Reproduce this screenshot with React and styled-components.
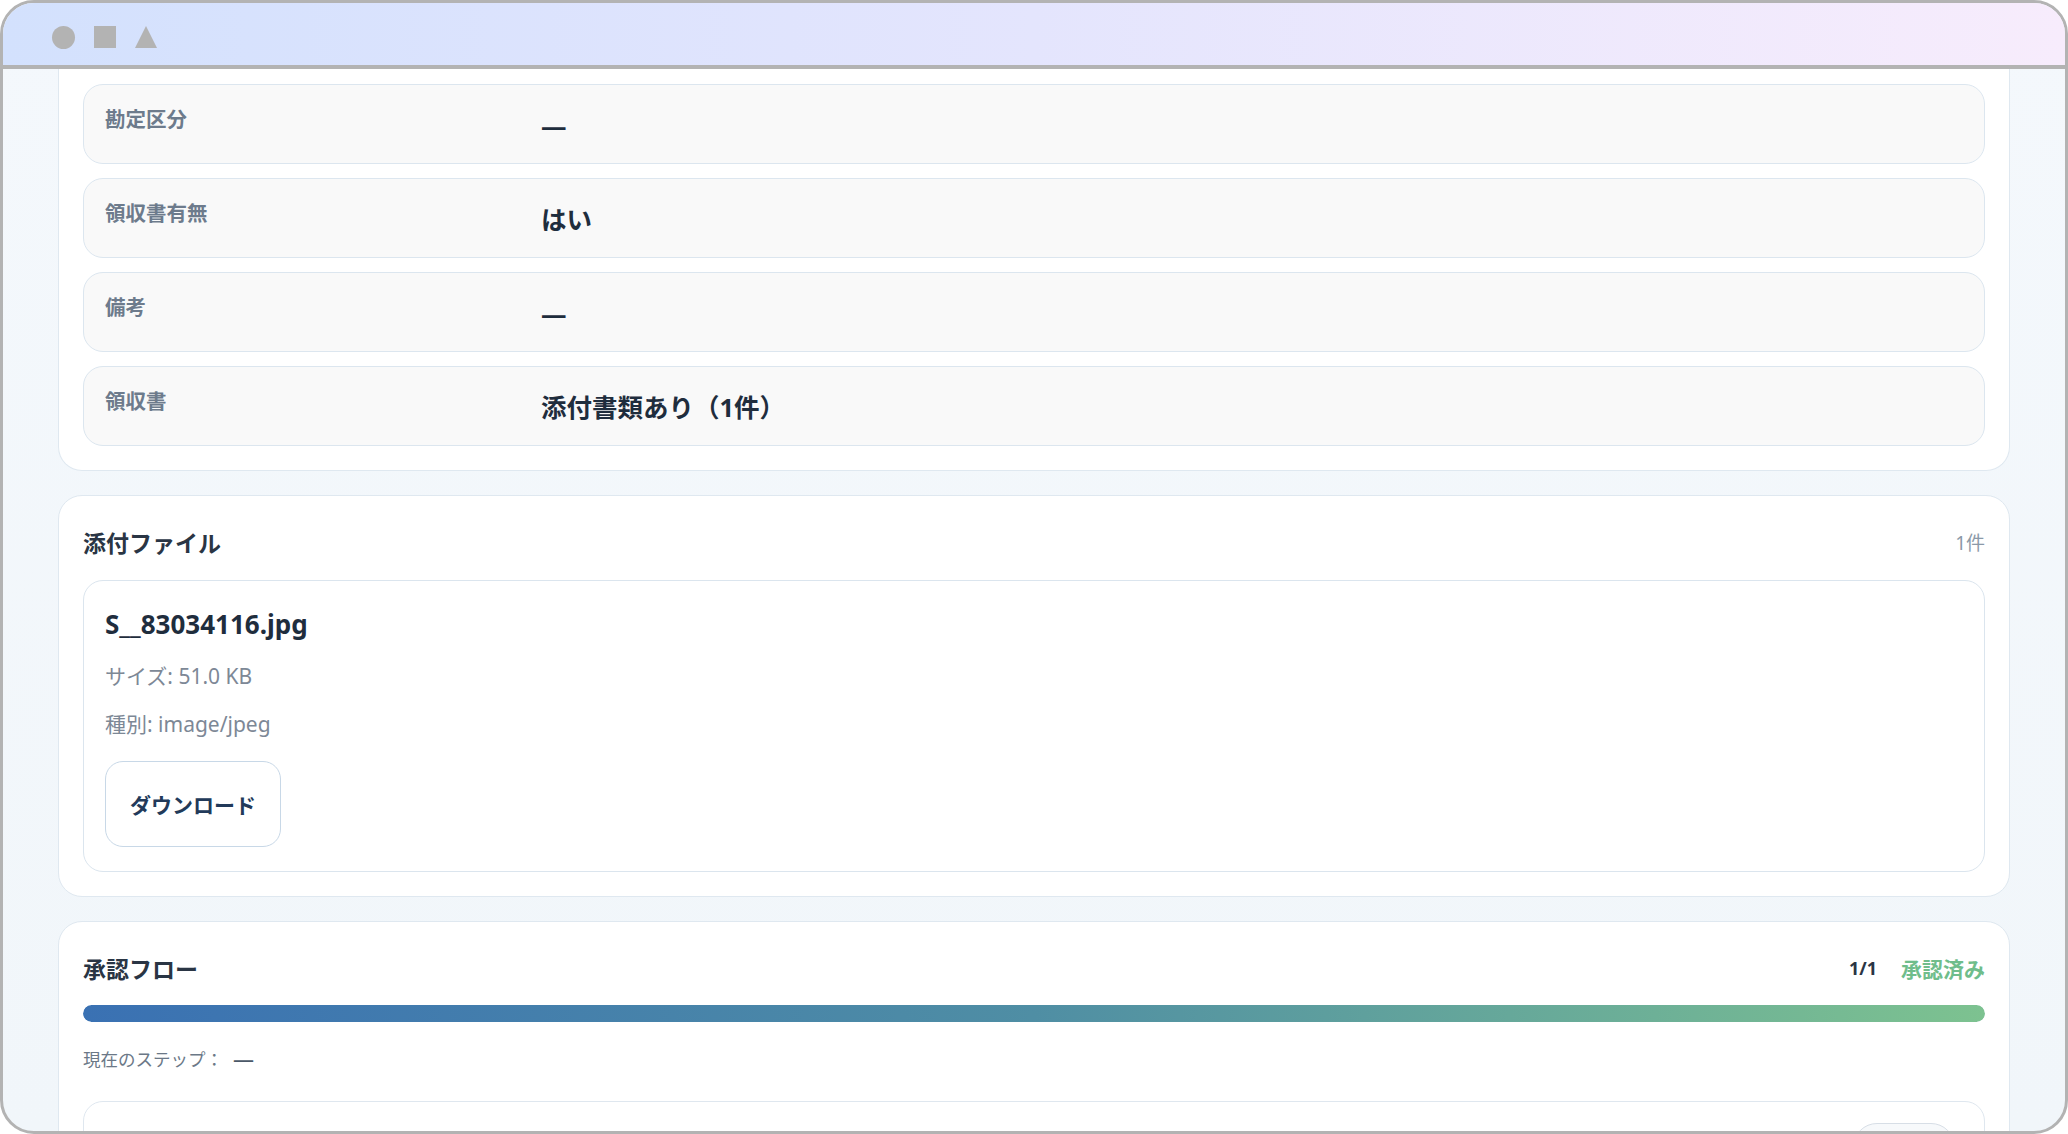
import React from "react";
import styled, { createGlobalStyle } from "styled-components";

const GlobalStyle = createGlobalStyle`
  html, body {
    margin: 0;
    padding: 0;
    background: #ffffff;
  }
  body {
    font-family: "Noto Sans", "Noto Sans CJK JP", sans-serif;
  }
  * {
    box-sizing: border-box;
  }
`;

const Window = styled.div`
  width: 2068px;
  height: 1134px;
  border: 3px solid #b3b3b3;
  border-radius: 34px;
  overflow: hidden;
  display: flex;
  flex-direction: column;
  background: linear-gradient(180deg, #f4f8fc 0%, #f1f6fa 100%);
`;

const TitleBar = styled.div`
  flex: none;
  height: 66px;
  padding: 6px 0 0 49px;
  border-bottom: 4px solid #b3b3b3;
  background: linear-gradient(90deg, #d3e1fd 0%, #e4e5fd 50%, #f7ecfc 100%);
  display: flex;
  align-items: center;
  gap: 19px;
`;

const Dot = styled.span`
  width: 23px;
  height: 23px;
  border-radius: 50%;
  background: #b3b3b3;
`;

const Square = styled.span`
  width: 22px;
  height: 22px;
  background: #b3b3b3;
`;

const Content = styled.div`
  flex: 1;
  overflow: hidden;
  padding: 0 55px;
  display: flex;
  flex-direction: column;
  gap: 24px;
`;

const Card = styled.section`
  flex: none;
  background: #ffffff;
  border: 1px solid #dfe8f0;
  border-radius: 24px;
  padding: 24px;
  ${p =>
    p.$clipped &&
    `
    border-top: none;
    border-top-left-radius: 0;
    border-top-right-radius: 0;
    padding-top: 15px;
  `}
`;

const FieldList = styled.div`
  display: flex;
  flex-direction: column;
  gap: 14px;
`;

const FieldRow = styled.div`
  height: 80px;
  padding: 20px 21px 0;
  border: 1px solid #dce6ef;
  border-radius: 20px;
  background: #f9f9f9;
  display: grid;
  grid-template-columns: 436px 1fr;
  align-items: start;
`;

const FieldLabel = styled.div`
  font-size: 20.5px;
  font-weight: 600;
  line-height: 28px;
  color: #6d7b8c;
`;

const FieldValue = styled.div`
  font-size: 25.5px;
  font-weight: 700;
  line-height: 36px;
  margin-top: 2px;
  color: #1f2d3d;
`;

const CardHeader = styled.div`
  height: 44px;
  display: flex;
  align-items: center;
  justify-content: space-between;
`;

const CardTitle = styled.h2`
  margin: 0;
  font-size: 23px;
  font-weight: 700;
  color: #2a3544;
`;

const Count = styled.span`
  font-size: 19px;
  color: #8b99a8;
`;

const FileBox = styled.div`
  margin-top: 16px;
  padding: 24px 21px;
  border: 1px solid #dbe5ee;
  border-radius: 20px;
  display: flex;
  flex-direction: column;
  align-items: flex-start;
`;

const FileName = styled.div`
  font-size: 26px;
  font-weight: 700;
  line-height: 38px;
  color: #1f2d3d;
`;

const FileMeta = styled.div`
  margin-top: 18px;
  font-size: 21px;
  line-height: 30px;
  color: #7d8896;
`;

const OutlineButton = styled.button`
  margin-top: 22px;
  width: 176px;
  height: 86px;
  border: 1px solid #c8d8e7;
  border-radius: 18px;
  background: #ffffff;
  font-family: inherit;
  font-size: 21px;
  font-weight: 700;
  color: #223a5a;
`;

const HeaderSide = styled.div`
  display: flex;
  align-items: center;
  gap: 24px;
`;

const StepCount = styled.span`
  font-size: 18px;
  font-weight: 700;
  color: #2a3544;
`;

const StatusText = styled.span`
  font-size: 21px;
  font-weight: 600;
  color: #6fbd8b;
`;

const ProgressTrack = styled.div`
  margin-top: 15px;
  height: 17px;
  border-radius: 9px;
  background: #e6edf3;
  overflow: hidden;
`;

const ProgressFill = styled.div`
  height: 100%;
  border-radius: 9px;
  background: linear-gradient(90deg, #3a71b3 0%, #4f8ea4 50%, #7dc290 100%);
`;

const StepNote = styled.div`
  margin-top: 22px;
  font-size: 17.5px;
  line-height: 30px;
  color: #6b7887;
  display: flex;
  gap: 10px;
`;

const StepValue = styled.span`
  font-size: 21px;
  color: #4b5868;
`;

const StepBox = styled.div`
  margin-top: 27px;
  height: 90px;
  padding: 21px 29px 0 24px;
  border: 1px solid #dfe7ef;
  border-radius: 20px;
  display: flex;
  align-items: flex-start;
  justify-content: flex-end;
`;

const Pill = styled.span`
  width: 102px;
  height: 48px;
  border: 1px solid #d7dee6;
  border-radius: 24px;
  background: #f7f9fb;
`;

const fields = [
  { label: "勘定区分", value: "—" },
  { label: "領収書有無", value: "はい" },
  { label: "備考", value: "—" },
  { label: "領収書", value: "添付書類あり（1件）" },
];

const progress = 1;

export default function App() {
  return (
    <>
      <GlobalStyle />
      <Window>
        <TitleBar>
          <Dot />
          <Square />
          <svg width="22" height="22" viewBox="0 0 22 22">
            <polygon points="11,0 22,22 0,22" fill="#b3b3b3" />
          </svg>
        </TitleBar>
        <Content>
          <Card $clipped>
            <FieldList>
              {fields.map(f => (
                <FieldRow key={f.label}>
                  <FieldLabel>{f.label}</FieldLabel>
                  <FieldValue>{f.value}</FieldValue>
                </FieldRow>
              ))}
            </FieldList>
          </Card>

          <Card>
            <CardHeader>
              <CardTitle>添付ファイル</CardTitle>
              <Count>1件</Count>
            </CardHeader>
            <FileBox>
              <FileName>S__83034116.jpg</FileName>
              <FileMeta>サイズ: 51.0 KB</FileMeta>
              <FileMeta>種別: image/jpeg</FileMeta>
              <OutlineButton>ダウンロード</OutlineButton>
            </FileBox>
          </Card>

          <Card>
            <CardHeader>
              <CardTitle>承認フロー</CardTitle>
              <HeaderSide>
                <StepCount>1/1</StepCount>
                <StatusText>承認済み</StatusText>
              </HeaderSide>
            </CardHeader>
            <ProgressTrack>
              <ProgressFill style={{ width: `${progress * 100}%` }} />
            </ProgressTrack>
            <StepNote>
              現在のステップ：<StepValue>—</StepValue>
            </StepNote>
            <StepBox>
              <Pill />
            </StepBox>
          </Card>
        </Content>
      </Window>
    </>
  );
}
